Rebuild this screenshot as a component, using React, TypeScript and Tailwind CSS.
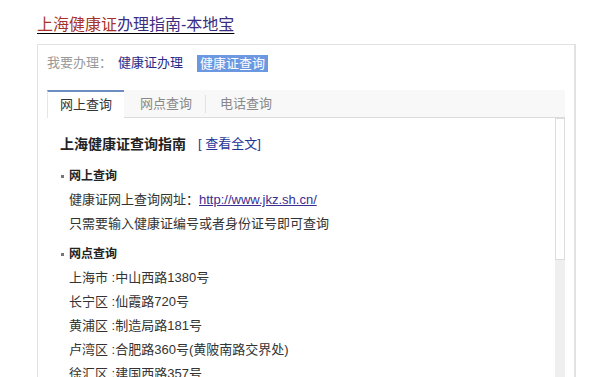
import React from "react";

const Bullet = ({ children }: { children: React.ReactNode }) => (
  <div className="flex items-center h-[24px] pl-[1px] font-bold text-[12px] text-[#222]">
    <span className="w-[3px] h-[3px] bg-[#777] mr-[5px]" />
    {children}
  </div>
);

const Line = ({ children }: { children: React.ReactNode }) => (
  <div className="h-[24px] leading-[24px] pl-[9px] text-[#333] whitespace-nowrap">{children}</div>
);

const App = () => {
  const sites = [
    "上海市 :中山西路1380号",
    "长宁区 :仙霞路720号",
    "黄浦区 :制造局路181号",
    "卢湾区 :合肥路360号(黄陂南路交界处)",
    "徐汇区 :建国西路357号",
  ];

  return (
    <div className="w-[607px] h-[377px] overflow-hidden bg-white font-['Liberation_Sans','Noto_Sans_CJK_SC',sans-serif]">
      {/* Title */}
      <div className="pl-[37px] pt-[13px] h-[44px]">
        <a className="text-[16px] leading-[24px] underline underline-offset-[3px]">
          <span className="text-[#a8322a]">上海健康证</span>
          <span className="text-[#3a2d82]">办理指南-本地宝</span>
        </a>
      </div>

      {/* Box */}
      <div className="ml-[37px] w-[539px] border border-[#e2e2e2] border-r-[2px] px-[9px]">
        <div className="flex items-center h-[36px] text-[13px]">
          <span className="text-[#999]">我要办理：</span>
          <span className="ml-[6px] text-[#2c2a86]">健康证办理</span>
          <span className="ml-[14px] bg-[#6c98e2] text-white px-[3px] leading-[17px]">健康证查询</span>
        </div>

        {/* Tabs */}
        <div className="mt-[9px] flex h-[28px] bg-[#f8f8f8] border-b border-[#dcdcdc] text-[13px]">
          <div className="w-[77px] flex items-center justify-center bg-white border-t-2 border-t-[#6b8dc0] border-l border-l-[#e6e6e6] -mb-[1px] text-[#333]">
            网上查询
          </div>
          <div className="flex items-center pl-[16px] text-[#888]">网点查询</div>
          <div className="self-center ml-[13px] w-px h-[18px] bg-[#e2e2e2]" />
          <div className="flex items-center pl-[14px] text-[#888]">电话查询</div>
        </div>

        {/* Content */}
        <div className="flex">
          <div className="flex-1 pl-[13px] pt-[14px] text-[13px]">
            <div className="flex items-center h-[24px]">
              <span className="font-bold text-[14px] text-[#222]">上海健康证查询指南</span>
              <span className="ml-[12px] text-[#1f3597]">[ 查看全文]</span>
            </div>
            <div className="mt-[8px]">
              <Bullet>网上查询</Bullet>
              <Line>
                健康证网上查询网址：
                <a className="text-[#3a2d8f] underline">http://www.jkz.sh.cn/</a>
              </Line>
              <Line>只需要输入健康证编号或者身份证号即可查询</Line>
            </div>
            <div className="mt-[6px]">
              <Bullet>网点查询</Bullet>
              {sites.map((s) => (
                <Line key={s}>{s}</Line>
              ))}
            </div>
          </div>

          {/* Scrollbar */}
          <div className="w-[10px] flex flex-col">
            <div className="h-[142px] border border-[#dcdcdc] bg-white" />
            <div className="flex-1 bg-[#efefef]" />
          </div>
        </div>
      </div>
    </div>
  );
};

export default App;
